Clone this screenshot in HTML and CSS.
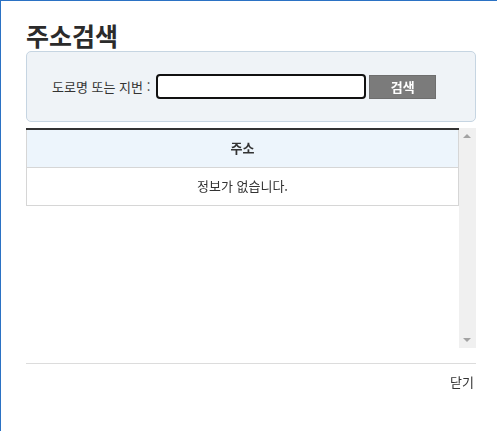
FILE: index.html
```html
<!DOCTYPE html>
<html lang="ko">
<head>
  <meta charset="UTF-8">
  <title>주소검색</title>
  <link rel="stylesheet" href="styles.css">
</head>
<body>

  <div class="popup">
    <h1>주소검색</h1>

    <!-- Search Form -->
    <form class="search-box">
      <label for="keyword">도로명 또는 지번 :</label>
      <input type="text" id="keyword" class="search-input" autofocus>
      <button type="submit" class="btn-search">검색</button>
    </form>

    <!-- Result List -->
    <div class="result-wrap">
      <div class="result-list">
        <table class="result-table">
          <thead>
            <tr><th>주소</th></tr>
          </thead>
          <tbody>
            <tr><td>정보가 없습니다.</td></tr>
          </tbody>
        </table>
      </div>
      <div class="scrollbar">
        <span class="arrow up"></span>
        <span class="arrow down"></span>
      </div>
    </div>

    <div class="popup-footer">
      <a href="#" class="btn-close">닫기</a>
    </div>
  </div>

</body>
</html>
```

FILE: styles.css
```css
/* Reset */
* {
  margin: 0;
  padding: 0;
  box-sizing: border-box;
}
html, body {
  height: 100%;
}
body {
  font-family: "Noto Sans CJK KR", "Noto Sans", sans-serif;
  font-size: 13px;
  color: #333;
  background-color: #fff;
  border-top: 1px solid #2b72c4;
  border-left: 1px solid #2b72c4;
}

/* Popup */
.popup {
  padding: 18px 21px 0 25px;
}
h1 {
  font-size: 25px;
  font-weight: bold;
  line-height: 32px;
  color: #2b2b2b;
}

/* Search Form */
.search-box {
  display: flex;
  align-items: center;
  height: 71px;
  padding-left: 25px;
  background-color: #eff3f7;
  border: 1px solid #c6d5e2;
  border-radius: 5px;
}
.search-box label {
  line-height: 18px;
  margin-right: 6px;
}
.search-input {
  width: 210px;
  height: 25px;
  border: 2px solid #111;
  border-radius: 4px;
  background-color: #fff;
  outline: none;
  padding: 0 3px;
  font: inherit;
}
.btn-search {
  width: 67px;
  height: 24px;
  margin-left: 3px;
  background-color: #7b7b7b;
  border: 1px solid #6e6e6e;
  color: #fff;
  font-family: inherit;
  font-size: 13px;
  font-weight: bold;
  cursor: pointer;
}

/* Result List */
.result-wrap {
  display: flex;
  height: 220px;
  margin-top: 6px;
}
.result-list {
  flex: 1;
}
.result-table {
  width: 100%;
  border-collapse: collapse;
  border-top: 2px solid #333;
}
.result-table th,
.result-table td {
  text-align: center;
  border: 1px solid #d6d6d6;
  border-top: none;
  line-height: 18px;
}
.result-table th {
  height: 38px;
  background-color: #edf5fc;
  font-weight: bold;
}
.result-table td {
  height: 38px;
}
.scrollbar {
  position: relative;
  width: 17px;
  background-color: #f0f0f0;
}
.arrow {
  position: absolute;
  left: 4px;
  width: 0;
  height: 0;
  border-left: 4px solid transparent;
  border-right: 4px solid transparent;
}
.arrow.up {
  top: 6px;
  border-bottom: 4px solid #a3a3a3;
}
.arrow.down {
  bottom: 6px;
  border-top: 4px solid #a3a3a3;
}

/* Footer */
.popup-footer {
  margin-top: 15px;
  border-top: 1px solid #dcdcdc;
  padding-top: 8px;
  text-align: right;
}
.btn-close {
  color: #333;
  text-decoration: none;
  line-height: 18px;
  margin-right: 2px;
}
```
